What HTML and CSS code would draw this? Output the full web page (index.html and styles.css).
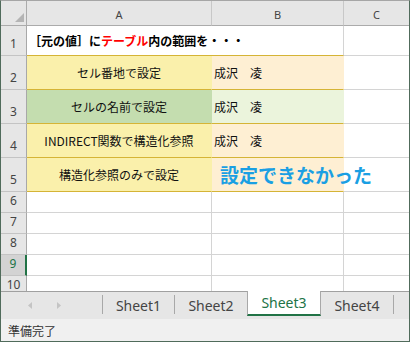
FILE: index.html
```html
<!DOCTYPE html>
<html lang="ja">
<head>
<meta charset="utf-8">
<title>Excel</title>
<link rel="stylesheet" href="styles.css">
</head>
<body>
<div class="window">
  <div class="sheet">
    <div class="cell corner"><svg width="9" height="9" viewBox="0 0 9 9"><polygon points="0,9 9,9 9,0" fill="#b4b4b4"/></svg></div>
    <div class="cell hd">A</div>
    <div class="cell hd">B</div>
    <div class="cell hd last">C</div>

    <div class="cell rh">1</div>
    <div class="cell title">［元の値］に<span class="red">テーブル</span>内の範囲を・・・</div>
    <div class="cell last"></div>

    <div class="cell rh">2</div>
    <div class="cell tc yellow center">セル番地で設定</div>
    <div class="cell tc orange">成沢　凌</div>
    <div class="cell last"></div>

    <div class="cell rh">3</div>
    <div class="cell tc green center">セルの名前で設定</div>
    <div class="cell tc lgreen">成沢　凌</div>
    <div class="cell last"></div>

    <div class="cell rh">4</div>
    <div class="cell tc yellow center">INDIRECT関数で構造化参照</div>
    <div class="cell tc orange">成沢　凌</div>
    <div class="cell last"></div>

    <div class="cell rh">5</div>
    <div class="cell tc yellow center">構造化参照のみで設定</div>
    <div class="cell tc orange"><span class="fail">設定できなかった</span></div>
    <div class="cell last"></div>

    <div class="cell rh">6</div><div class="cell"></div><div class="cell"></div><div class="cell last"></div>
    <div class="cell rh">7</div><div class="cell"></div><div class="cell"></div><div class="cell last"></div>
    <div class="cell rh">8</div><div class="cell"></div><div class="cell"></div><div class="cell last"></div>
    <div class="cell rh sel">9</div><div class="cell"></div><div class="cell"></div><div class="cell last"></div>
    <div class="cell rh r10">10</div><div class="cell r10"></div><div class="cell r10"></div><div class="cell last r10"></div>
  </div>

  <div class="tabbar">
    <div class="nav">
      <svg class="arrow" width="5" height="7" viewBox="0 0 5 7"><polygon points="4,0 4,7 0,3.5" fill="#c4c4c4"/></svg>
      <svg class="arrow" width="5" height="7" viewBox="0 0 5 7"><polygon points="0,0 0,7 4,3.5" fill="#c4c4c4"/></svg>
    </div>
    <span class="sep"></span>
    <div class="tab w71">Sheet1</div>
    <span class="sep"></span>
    <div class="tab">Sheet2</div>
    <div class="tab active">Sheet3</div>
    <div class="tab">Sheet4</div>
    <span class="sep"></span>
  </div>

  <div class="status">準備完了</div>
</div>
</body>
</html>
```

FILE: styles.css
```css
* { box-sizing: border-box; }

body {
  margin: 0;
  background: #fff;
  font-family: "Noto Sans CJK JP", sans-serif;
}

.window {
  width: 410px;
  height: 342px;
  border-top: 1px solid #a6a6a6;
  border-left: 1px solid #506b5b;
  border-right: 1px solid #506b5b;
  border-bottom: 1px solid #506b5b;
  display: flex;
  flex-direction: column;
  overflow: hidden;
}

.sheet {
  height: 290px;
  overflow: hidden;
  display: grid;
  grid-template-columns: 26px 185px 132px 65px;
  grid-template-rows: 25px 30px 34px 34px 34px 34px 21px 21px 21px 21px 15px;
  background: #fff;
  flex: none;
}

.cell {
  border-right: 1px solid #d4d4d4;
  border-bottom: 1px solid #d4d4d4;
  display: flex;
  align-items: center;
  min-width: 0;
  font-size: 12px;
  color: #111;
  white-space: nowrap;
}

.cell.last { border-right: none; }
.cell.r10 { border-bottom: none; }

.corner {
  background: #e6e6e6;
  border-right-color: #ababab;
  border-bottom-color: #ababab;
  justify-content: flex-end;
  align-items: flex-end;
  padding: 0 2px 3px 0;
}
.corner svg { display: block; }

.hd {
  background: #e6e6e6;
  border-bottom-color: #ababab;
  border-right-color: #c8c8c8;
  justify-content: center;
  font-family: "Noto Sans", sans-serif;
  font-size: 11px;
  color: #444;
  padding-top: 3px;
}

.rh {
  background: #e6e6e6;
  border-right-color: #a8a8a8;
  border-bottom-color: #c4c4c4;
  justify-content: center;
  align-items: flex-end;
  font-family: "Noto Sans", sans-serif;
  font-size: 12px;
  line-height: 12px;
  color: #444;
  padding-bottom: 5px;
}
.rh.r10 { padding-bottom: 0; }

.rh.sel {
  background: #d3d3d3;
  border-right: 2px solid #217346;
  color: #217346;
}

.title {
  grid-column: span 2;
  font-weight: 700;
  border-bottom-color: #d5b436;
  padding-left: 2px;
  color: #000;
}
.red { color: #ff0000; }

.tc {
  border-bottom-color: #d5b436;
  border-right-color: transparent;
  padding-left: 2px;
}
.center { justify-content: center; padding-left: 0; }

.yellow { background: #faf0ab; }
.orange { background: #feefd3; }
.green { background: #c4ddaf; }
.lgreen { background: #ebf4dc; }

.fail {
  padding-left: 6px;
  font-size: 19px;
  font-weight: 700;
  color: #1a9fe3;
  overflow: visible;
}

.tabbar {
  flex: none;
  height: 28px;
  border-top: 1px solid #a0a0a0;
  background: #e6e6e6;
  display: flex;
  align-items: flex-start;
}

.nav {
  width: 101px;
  height: 27px;
  display: flex;
  align-items: center;
  padding-left: 27px;
  gap: 24px;
}
.arrow { display: block; }

.sep {
  width: 1px;
  height: 19px;
  margin-top: 3px;
  background: #a8a8a8;
}

.tab {
  width: 72px;
  height: 27px;
  display: flex;
  align-items: center;
  justify-content: center;
  font-family: "Noto Sans", sans-serif;
  font-size: 14px;
  color: #444;
}
.tab.w71 { width: 71px; }

.tab.active {
  width: 74px;
  height: 25px;
  margin-top: -1px;
  background: #fff;
  border-left: 1px solid #a8a8a8;
  border-right: 1px solid #a8a8a8;
  border-bottom: 2px solid #217346;
  color: #217346;
  padding-bottom: 1px;
}

.status {
  flex: 1;
  background: #f0f0f0;
  display: flex;
  align-items: center;
  padding-left: 7px;
  font-size: 12px;
  color: #333;
}
```
